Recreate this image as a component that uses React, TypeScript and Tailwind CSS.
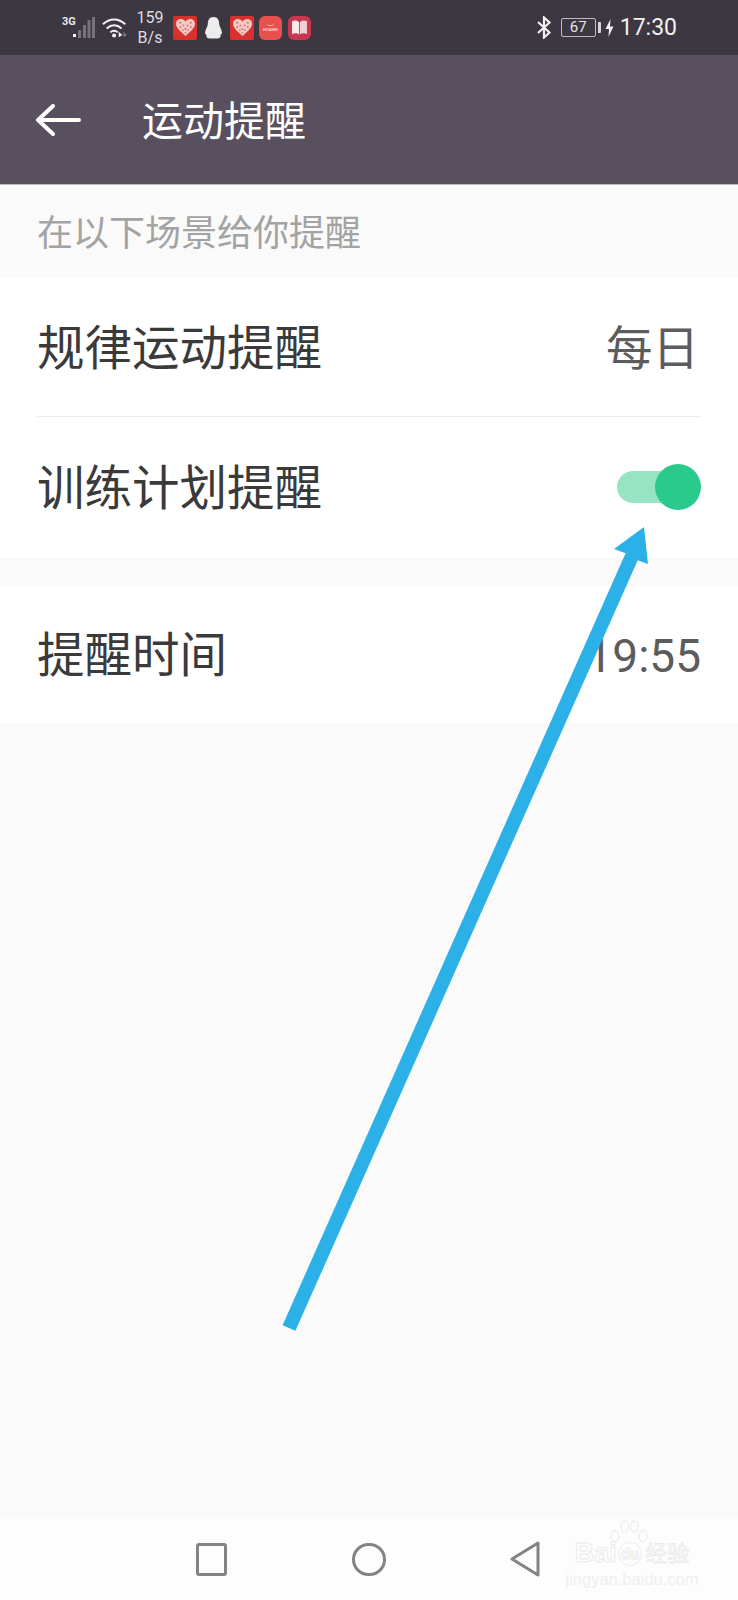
const CJK = 'font-["Roboto","Noto_Sans_CJK_SC",sans-serif]';

function HeartTile({ className }: { className: string }) {
  return (
    <div className={`flex h-[24px] w-[24px] items-center justify-center rounded-[2px] bg-[#d8302c] ${className}`}>
      <svg width="21" height="19" viewBox="0 0 20 18">
        <path d="M10 17 C4 12 1 9 1 5.5 C1 2.5 3.2 1 5.5 1 C7.5 1 9 2 10 3.5 C11 2 12.5 1 14.5 1 C16.8 1 19 2.5 19 5.5 C19 9 16 12 10 17Z" fill="#f3c9c5" />
        <g fill="#d8706c">
          <circle cx="5" cy="4.5" r="1" />
          <circle cx="8" cy="7" r="0.9" />
          <circle cx="12" cy="7" r="0.9" />
          <circle cx="15" cy="4.5" r="1" />
          <circle cx="5" cy="8.5" r="0.9" />
          <circle cx="15" cy="8.5" r="0.9" />
          <circle cx="10" cy="10.5" r="1" />
          <circle cx="7.5" cy="11.5" r="0.8" />
          <circle cx="12.5" cy="11.5" r="0.8" />
          <circle cx="10" cy="14" r="0.8" />
        </g>
      </svg>
    </div>
  );
}

function StatusLeft() {
  return (
    <div className="flex items-center">
      <div className="relative h-[24px] w-[33px]">
        <span className="absolute left-0 top-[0px] font-['Roboto',sans-serif] text-[11px] font-bold leading-[12px] text-[#e8e6ea]">3G</span>
        <svg className="absolute left-[11px] top-[1px]" width="22" height="22" viewBox="0 0 22 22">
          <rect x="0" y="17" width="3" height="3" fill="#f2f2f2" />
          <rect x="5" y="13" width="3" height="8" fill="#77737c" />
          <rect x="10" y="8" width="3" height="13" fill="#77737c" />
          <rect x="14.5" y="3" width="3" height="18" fill="#77737c" />
          <rect x="19" y="0" width="3" height="21" fill="#77737c" />
        </svg>
      </div>
      <svg className="ml-[7px]" width="26" height="22" viewBox="0 0 28 22" fill="none">
        <path d="M1 7 C8 0 18 0 25 7" stroke="#f2f2f2" strokeWidth="2.2" />
        <path d="M5 11.5 C10 7 16 7 21 11.5" stroke="#f2f2f2" strokeWidth="2.2" />
        <path d="M9 15.5 C11.5 13.5 14.5 13.5 17 15.5" stroke="#f2f2f2" strokeWidth="2" />
        <circle cx="13" cy="19" r="2.2" fill="#f2f2f2" />
        <path d="M18 15 L22 18.5 L18 21Z" fill="#f2f2f2" />
        <path d="M23 15 L27 18.5 L23 21Z" fill="#77737c" />
      </svg>
      <div className="ml-[9px] flex w-[26px] flex-col items-center pt-[1px] font-['Roboto',sans-serif] text-[16px] leading-[20px] text-[#dedce0]">
        <span>159</span>
        <span>B/s</span>
      </div>
      <HeartTile className="ml-[10px]" />
      <svg className="ml-[6px]" width="21" height="24" viewBox="0 0 24 25">
        <path d="M12 0 C17 0 18.5 4 18.5 8 C18.5 10 20 12 21 15 C22 18 22 20 20 20 C20.5 22 20 24 17 24.5 L7 24.5 C4 24 3.5 22 4 20 C2 20 2 18 3 15 C4 12 5.5 10 5.5 8 C5.5 4 7 0 12 0Z" fill="#ececec" />
      </svg>
      <HeartTile className="ml-[6px]" />
      <div className="ml-[5px] flex h-[24px] w-[23px] flex-col items-center justify-center rounded-[6px] bg-[#e8504e]">
        <div className="h-[3px] w-[7px] rounded-b-full border-b border-[#f7c9c8]" />
        <span className="mt-[1px] font-['Roboto',sans-serif] text-[4px] leading-[5px] text-white">HUAWEI</span>
      </div>
      <div className="ml-[6px] flex h-[24px] w-[23px] items-center justify-center rounded-[6px] bg-[#c9364f]">
        <svg width="17" height="15" viewBox="0 0 16 14">
          <path d="M1 1 C4 0 6 0.5 7.6 2 L7.6 13.5 C6 12.5 4 12 1 13Z" fill="#f7ecec" />
          <path d="M15 1 C12 0 10 0.5 8.4 2 L8.4 13.5 C10 12.5 12 12 15 13Z" fill="#f1cfd3" />
        </svg>
      </div>
    </div>
  );
}

function StatusRight() {
  return (
    <div className="flex items-center">
      <svg width="16" height="23" viewBox="0 0 16 23" fill="none" stroke="#f0f0f0" strokeWidth="2.2">
        <path d="M2 6 L13.5 16.5 L8 21.5 L8 1.5 L13.5 6.5 L2 17" />
      </svg>
      <div className="ml-[9px] flex h-[19px] w-[35px] items-center justify-center rounded-[2px] border border-[#bdbbc0] font-['Roboto',sans-serif] text-[15px] leading-none text-[#e4e3e6]">
        67
      </div>
      <div className="ml-[2px] h-[11px] w-[3px] rounded-r-[1px] bg-[#d6d5d8]" />
      <svg className="ml-[4px]" width="9" height="18" viewBox="0 0 9 18">
        <path d="M5.5 0 L0.5 10 L4 10 L3.5 18 L8.5 7.5 L5 7.5Z" fill="#f0f0f0" />
      </svg>
      <span className="ml-[6px] font-['Roboto',sans-serif] text-[23px] leading-none text-[#f0f0f0]">17:30</span>
    </div>
  );
}

function Row({ label, h, children }: { label: string; h: string; children: React.ReactNode }) {
  return (
    <div className={`flex items-center justify-between ${h}`}>
      <span className="pt-[5px] text-[47.5px] leading-none text-[#3a3a3a]">{label}</span>
      {children}
    </div>
  );
}

function Toggle() {
  return (
    <div className="flex items-center">
      <div className="h-[32px] w-[62px] rounded-full bg-[#96e4c4]" />
      <div className="ml-[-24px] h-[46px] w-[46px] rounded-full bg-[#2ac98c]" />
    </div>
  );
}

export default function App() {
  return (
    <div className={`relative flex h-[1600px] w-[738px] flex-col overflow-hidden bg-[#fafafa] ${CJK}`}>
      <div className="flex h-[55px] items-center justify-between bg-[#3d3742] pl-[62px] pr-[61px]">
        <StatusLeft />
        <StatusRight />
      </div>

      <div className="flex h-[130px] items-center border-b border-[#bbb9bd] bg-[#59505f] pl-[35px]">
        <svg width="46" height="32" viewBox="0 0 46 32" fill="none" stroke="white" strokeWidth="4" strokeLinecap="round" strokeLinejoin="round">
          <path d="M44 16 H3 M18 2 L3 16 L18 30" />
        </svg>
        <span className="ml-[61px] pt-[5px] text-[41px] leading-none text-white">运动提醒</span>
      </div>

      <div className="flex h-[93px] items-center pl-[37px] pt-[5px] text-[36px] text-[#a3a3a3]">在以下场景给你提醒</div>

      <div className="bg-white px-[37px]">
        <Row label="规律运动提醒" h="h-[138px]">
          <span className="pr-[2px] pt-[5px] text-[46.5px] leading-none text-[#5c5c5c]">每日</span>
        </Row>
        <div className="h-px bg-[#ececec]" />
        <Row label="训练计划提醒" h="h-[140px]">
          <Toggle />
        </Row>
      </div>

      <div className="mt-[28px] bg-white px-[37px]">
        <Row label="提醒时间" h="h-[138px]">
          <span className="pt-[3px] text-[46px] leading-none text-[#5c5c5c]">19:55</span>
        </Row>
      </div>

      <div className="mt-auto flex h-[82px] items-center bg-[#fdfdfd]">
        <div className="ml-[196px] h-[33px] w-[31px] rounded-[3px] border-[3px] border-[#838383]" />
        <div className="ml-[125px] h-[33px] w-[34px] rounded-full border-[3px] border-[#838383]" />
        <svg className="ml-[124px]" width="30" height="36" viewBox="0 0 30 36" fill="none">
          <path d="M28 2 L2 18 L28 34Z" stroke="#838383" strokeWidth="3" strokeLinejoin="round" />
        </svg>
      </div>

      {/* baidu watermark */}
      <div className="absolute left-[566px] top-[1520px] flex w-[132px] flex-col items-center text-[#efefef]">
        <svg className="ml-[-6px]" width="40" height="28" viewBox="0 0 36 26" fill="none" stroke="#ececec" strokeWidth="1.2">
          <ellipse cx="5" cy="15" rx="3.5" ry="5" />
          <ellipse cx="14" cy="6" rx="3.5" ry="5" />
          <ellipse cx="23" cy="6" rx="3.5" ry="5" />
          <ellipse cx="31" cy="15" rx="3.5" ry="5" />
        </svg>
        <div className="mt-[-8px] flex items-center font-['Liberation_Sans',sans-serif] text-[27px] font-bold leading-none text-transparent [-webkit-text-stroke:1px_#ececec]">
          <span>Bai</span>
          <span className="ml-[1px] flex h-[24px] items-center rounded-full border border-[#ececec] px-[2px] text-[15px]">du</span>
          <span className={`ml-[3px] text-[22px] font-normal ${CJK}`}>经验</span>
        </div>
        <span className="mt-[4px] font-['Liberation_Sans',sans-serif] text-[16.5px] leading-none">jingyan.baidu.com</span>
      </div>

      {/* annotation arrow */}
      <svg className="absolute left-0 top-0" width="738" height="1600" viewBox="0 0 738 1600">
        <path d="M289 1328 L632 556" stroke="#2bb0e8" strokeWidth="14" />
        <path d="M644 527 L648 564 L637 560 L625 553 L614 549Z" fill="#2bb0e8" />
      </svg>
    </div>
  );
}
